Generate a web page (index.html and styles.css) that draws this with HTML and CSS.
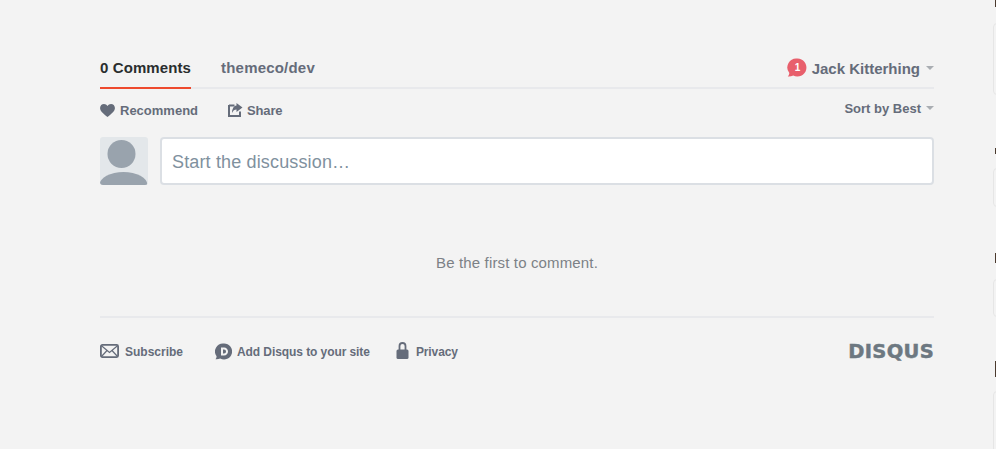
FILE: index.html
```html
<!DOCTYPE html>
<html>
<head>
  <title>Disqus comments</title>
  <meta name="viewport" content="width=device-width, initial-scale=1">
  <link rel="stylesheet" href="styles.css">
</head>
<body>

  <main class="thread">
    <div class="nav">
      <div class="nav-tabs">
        <a class="tab tab-active">0 Comments</a>
        <a class="tab">themeco/dev</a>
      </div>
      <div class="user">
        <span class="badge">
          <svg class="badge-bubble" viewBox="0 0 20 20"><path d="M10.5 0.5a9 9 0 1 1-4.2 17c-1.500 0.600-3.500 1-5.500 0.900 0.900-0.800 1.400-2 1.500-3.400A9 9 0 0 1 10.500 0.500z"/></svg>
          <span class="badge-count">1</span>
        </span>
        <span class="user-name">Jack Kitterhing</span>
        <span class="caret"></span>
      </div>
    </div>

    <div class="actions">
      <div class="actions-left">
        <a class="action">
          <svg class="icon-heart" viewBox="0 0 16 14"><path d="M8 14C3 10 0 7.500 0 4.300 0 1.800 1.900 0 4.200 0 5.800 0 7.200 0.800 8 2.100 8.800 0.800 10.200 0 11.800 0 14.100 0 16 1.800 16 4.300 16 7.500 13 10 8 14z"/></svg>
          Recommend
        </a>
        <a class="action action-share">
          <svg class="icon-share" viewBox="0 0 15 14"><path d="M1 2.500h5.500M1 2v11h11V8.500" fill="none" stroke-width="2"/><path class="solid" d="M8.500 0l6 4.500-6 4.500V6.500C6.500 6.500 5 7.500 4 10 4 6.500 5.500 3 8.500 2.600z"/></svg>
          Share
        </a>
      </div>
      <div class="sort">Sort by Best <span class="caret"></span></div>
    </div>

    <div class="composer">
      <div class="avatar">
        <svg viewBox="0 0 48 48"><circle cx="21.500" cy="17" r="14"/><ellipse cx="23.500" cy="48" rx="24" ry="13"/></svg>
      </div>
      <div class="composer-input">Start the discussion…</div>
    </div>

    <p class="empty">Be the first to comment.</p>

    <div class="footer">
      <a class="foot-link foot-subscribe">
        <svg class="icon-mail" viewBox="0 0 19 14"><rect x="0.900" y="0.900" width="17.200" height="12.200" rx="1.500" fill="none" stroke-width="1.800"/><path d="M1.500 1.800l8 6.700 8-6.700M1.500 12.500l5.500-6M17.500 12.500l-5.500-6" fill="none" stroke-width="1.200"/></svg>
        Subscribe
      </a>
      <a class="foot-link foot-add">
        <svg class="icon-d" viewBox="0 0 17 17"><path fill-rule="evenodd" d="M9 0.500a8 8 0 1 1-3.800 15c-1.300 0.600-3 0.900-4.700 0.700 0.700-0.800 1.100-1.800 1.100-3A8 8 0 0 1 9 0.500zM6 4.500v8h3c2.400 0 4-1.700 4-4s-1.600-4-4-4zM8 6.500h1c1.200 0 2 0.800 2 2s-0.800 2-2 2H8z"/></svg>
        Add Disqus to your site
      </a>
      <a class="foot-link foot-privacy">
        <svg class="icon-lock" viewBox="0 0 13 17"><path d="M3.500 8V4a3 3 0 0 1 6 0V8" fill="none" stroke-width="1.800"/><rect class="solid" x="0.500" y="7.500" width="12" height="9.500" rx="1.500"/></svg>
        Privacy
      </a>
      <span class="logo">DISQUS</span>
    </div>
  </main>

  <aside class="sidebar">
    <div class="side-mark mark-one"></div>
    <div class="side-card card-one"></div>
    <div class="side-mark mark-two"></div>
    <div class="side-card card-two"></div>
    <div class="side-mark mark-three"></div>
    <div class="side-card card-three"></div>
    <div class="side-mark mark-four"></div>
    <div class="side-card card-four"></div>
  </aside>

</body>
</html>
```

FILE: styles.css
```css
html, body {
  height: 100%;
}

body {
  background-color: #f3f3f3;
  color: #656c7a;
  font-family: "Liberation Sans", Arial, sans-serif;
  display: flex;
  height: 449px;
  margin: 0;
  overflow: hidden;
}

a {
  color: inherit;
}

svg {
  display: block;
  flex: none;
  fill: #656c7a;
  stroke: none;
}

.thread {
  box-sizing: border-box;
  width: 993px;
  flex: none;
  padding: 52px 59px 0 100px;
}

.nav {
  display: flex;
  justify-content: space-between;
  height: 35px;
  border-bottom: 2px solid #e8e9ec;
}

.nav-tabs {
  display: flex;
  gap: 30px;
}

.tab {
  font-size: 15px;
  font-weight: bold;
  letter-spacing: 0.2px;
  line-height: 32px;
  height: 35px;
}

.tab-active {
  color: #2a2e2e;
  letter-spacing: 0.1px;
  border-bottom: 2px solid #ee4a2e;
}

.user {
  display: flex;
  align-items: center;
  height: 32px;
  font-size: 15px;
  font-weight: bold;
}

.badge {
  position: relative;
  display: block;
  width: 20px;
  height: 20px;
  margin-right: 5px;
}

.badge-bubble {
  width: 20px;
  height: 20px;
  fill: #e85f6c;
}

.badge-count {
  position: absolute;
  top: 4px;
  left: 1px;
  width: 20px;
  text-align: center;
  color: white;
  font-size: 10px;
  line-height: 12px;
}

.user-name {
  margin-right: 6px;
}

.caret {
  display: inline-block;
  width: 0;
  height: 0;
  border-left: 4px solid transparent;
  border-right: 4px solid transparent;
  border-top: 4px solid #a9adb2;
}

.actions {
  display: flex;
  justify-content: space-between;
  height: 48px;
}

.actions-left {
  display: flex;
  gap: 30px;
  padding-top: 12px;
}

.action {
  display: flex;
  align-items: center;
  gap: 5px;
  height: 18px;
  font-size: 13px;
  font-weight: bold;
}

.action-share {
  gap: 4px;
  letter-spacing: -0.15px;
}

.icon-heart {
  width: 15px;
  height: 13px;
}

.icon-share {
  width: 15px;
  height: 14px;
  stroke: #656c7a;
}

.icon-share .solid {
  stroke: none;
}

.sort {
  display: flex;
  align-items: center;
  gap: 5px;
  height: 18px;
  padding-top: 10px;
  font-size: 13px;
  font-weight: bold;
}

.composer {
  display: flex;
  gap: 12px;
}

.avatar {
  width: 48px;
  height: 48px;
  flex: none;
  background-color: #e3e7ea;
  border-radius: 3px;
  overflow: hidden;
}

.avatar svg {
  fill: #99a3ad;
}

.composer-input {
  box-sizing: border-box;
  flex: 1;
  height: 48px;
  padding-left: 10px;
  background-color: white;
  border: 2px solid #dbdfe4;
  border-radius: 4px;
  color: #7f919e;
  font-size: 18px;
  letter-spacing: 0.15px;
  line-height: 46px;
}

.empty {
  margin: 0;
  padding: 70px 0 45px;
  height: 16px;
  border-bottom: 2px solid #e8e9ec;
  color: #7c8186;
  font-size: 15px;
  letter-spacing: 0.15px;
  line-height: 16px;
  text-align: center;
}

.footer {
  display: flex;
  align-items: center;
  height: 20px;
  margin-top: 24px;
  font-size: 12px;
  font-weight: bold;
}

.foot-link {
  display: flex;
  align-items: center;
}

.foot-subscribe {
  gap: 6px;
  margin-right: 32px;
}

.foot-add {
  gap: 5px;
  letter-spacing: -0.08px;
  margin-right: 26px;
}

.foot-privacy {
  gap: 7px;
  letter-spacing: -0.1px;
}

.icon-mail {
  width: 19px;
  height: 14px;
  margin-top: -2px;
  stroke: #656c7a;
}

.icon-d {
  width: 17px;
  height: 17px;
  margin-top: -2px;
}

.icon-lock {
  width: 13px;
  height: 17px;
  margin-top: -4px;
  stroke: #656c7a;
}

.icon-lock .solid {
  stroke: none;
}

.logo {
  margin-left: auto;
  color: #6d7881;
  font-family: "DejaVu Sans", sans-serif;
  font-size: 19.5px;
  font-weight: bold;
  letter-spacing: 0.3px;
  line-height: 20px;
  -webkit-text-stroke: 0.5px #6d7881;
}

.sidebar {
  flex: 1;
  overflow: hidden;
}

.side-mark {
  margin-left: 2px;
  background-color: #4b3a2e;
}

.side-card {
  box-sizing: border-box;
  width: 12px;
  border: 1px solid #e6e6e6;
  border-radius: 4px;
}

.mark-one {
  height: 7px;
}

.card-one {
  height: 72px;
  margin-top: 16px;
}

.mark-two {
  height: 6px;
  margin-top: 53px;
}

.card-two {
  height: 39px;
  margin-top: 14px;
}

.mark-three {
  height: 10px;
  margin-top: 46px;
}

.card-three {
  height: 38px;
  margin-top: 16px;
}

.mark-four {
  height: 16px;
  margin-top: 44px;
}

.card-four {
  height: 70px;
  margin-top: 14px;
}
```
